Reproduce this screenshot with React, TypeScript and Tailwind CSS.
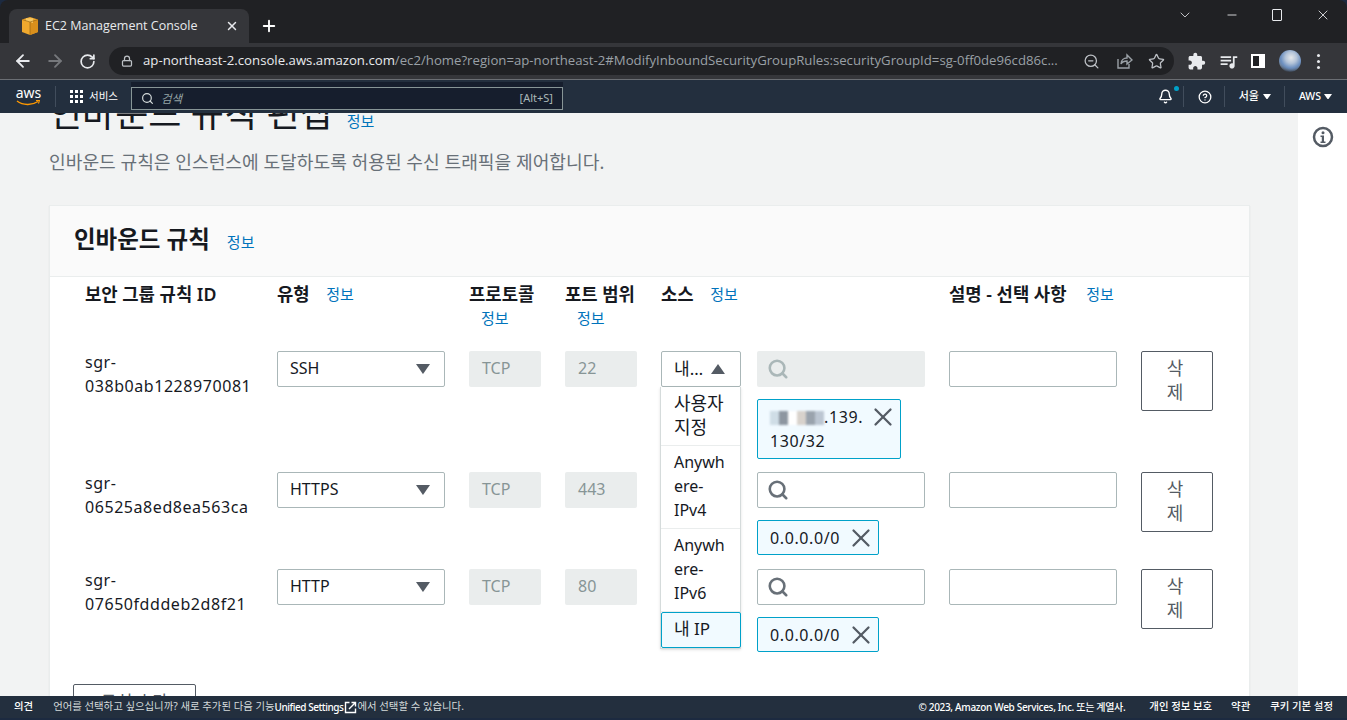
import {
  ArrowLeft,
  ArrowRight,
  RotateCw,
  Lock,
  Search,
  Star,
  Bell,
  CircleHelp,
  X,
  Plus,
  Minus,
  ChevronDown,
  ZoomOut,
} from "lucide-react"
import { MdExtension, MdOutlineQueueMusic } from "react-icons/md"

function Caret({ up = false, color = "#545b64", size = 14 }: { up?: boolean; color?: string; size?: number }) {
  return (
    <svg width={size} height={size * 0.72} viewBox="0 0 14 10" className="shrink-0">
      <polygon points={up ? "7,0 14,10 0,10" : "0,0 14,0 7,10"} fill={color} />
    </svg>
  )
}

function InfoLink({ className = "" }: { className?: string }) {
  return <a className={"text-[15px] font-normal text-[#0073bb] " + className}>정보</a>
}

function Favicon() {
  return (
    <svg width="16" height="18" viewBox="0 0 16 18">
      <polygon points="8,0 16,2.5 16,15 8,18 0,15 0,2.5" fill="#f0a92e" />
      <polygon points="8,5 16,2.5 16,15 8,18" fill="#d98f1c" />
      <polygon points="4,1.300 11,1.300 11,6 8,5 4,4" fill="#f8c861" />
      <path d="M8 5v13M0 2.500 8 5l8-2.500" stroke="#8a5a10" strokeWidth="0.6" fill="none" />
    </svg>
  )
}

function ShareIcon() {
  return (
    <svg width="18" height="18" viewBox="0 0 18 18" fill="none" stroke="#9aa0a6" strokeWidth="1.4">
      <path d="M3 7v9h11v-4" />
      <path d="M6 12c0-4 3-6 6-6V3l5 5-5 4V9c-3 0-5 1-6 3z" />
    </svg>
  )
}

function Chrome() {
  return (
    <div className="shrink-0 font-['Open_Sans','Noto_Sans_CJK_KR',sans-serif]">
      <div className="flex h-[43px] items-end bg-[#202124] pl-[9px]">
        <div className="flex h-[34px] w-[240px] items-center rounded-t-lg bg-[#35363a] pl-[13px] pr-[10px]">
          <Favicon />
          <span className="ml-[7px] flex-1 text-[12.5px] text-[#e8eaed]">EC2 Management Console</span>
          <X size={14} strokeWidth={2.5} className="text-[#e8eaed]" />
        </div>
        <div className="ml-[11px] flex h-[34px] items-center">
          <Plus size={18} strokeWidth={2.5} className="text-white" />
        </div>
        <div className="relative ml-auto flex h-full items-start self-start pt-[7px] text-[#e8eaed]">
          <ChevronDown size={16} strokeWidth={1.2} className="mr-[32px]" />
          <Minus size={14} strokeWidth={1.5} className="mr-[33px] mt-[1px]" />
          <div className="mr-[33px] mt-[2px] h-[12px] w-[10px] rounded-[1px] border border-[#e8eaed]" />
          <X size={16} strokeWidth={1.3} className="mr-[16px]" />
        </div>
      </div>
      <div className="flex h-[36px] items-center bg-[#35363a] pl-[13px]">
        <ArrowLeft size={20} strokeWidth={2.2} className="text-[#e8eaed]" />
        <ArrowRight size={20} strokeWidth={2.2} className="ml-[12px] text-[#76787c]" />
        <RotateCw size={17} strokeWidth={2.4} className="ml-[14px] text-[#e8eaed]" />
        <div className="ml-[13px] flex h-[28px] w-[1065px] items-center rounded-full bg-[#202124] pl-[12px]">
          <Lock size={12} strokeWidth={2.5} className="text-[#bdc1c6]" />
          <div className="ml-[10px] w-[924px] overflow-hidden whitespace-nowrap text-[13.2px] text-[#9aa0a6]">
            <span className="text-[#e8eaed]">ap-northeast-2.console.aws.amazon.com</span>
            /ec2/home?region=ap-northeast-2#ModifyInboundSecurityGroupRules:securityGroupId=sg-0ff0de96cd86c...
          </div>
          <ZoomOut size={17} strokeWidth={1.8} className="ml-[16px] text-[#bdc1c6]" />
          <div className="ml-[15px]">
            <ShareIcon />
          </div>
          <Star size={17} strokeWidth={1.8} className="ml-[15px] text-[#bdc1c6]" />
        </div>
        <MdExtension size={19} className="ml-[13px] text-[#e8eaed]" />
        <MdOutlineQueueMusic size={21} className="ml-[12px] text-[#e8eaed]" />
        <div className="ml-[12px] flex h-[14px] w-[14px] justify-start border-2 border-white">
          <div className="h-full w-[6px] bg-[#202124]" />
          <div className="h-full flex-1 bg-white" />
        </div>
        <div className="ml-[14px] h-[22px] w-[22px] rounded-full bg-[radial-gradient(circle_at_55%_35%,#e6e8ea_0%,#b4c4d8_30%,#6c8fbf_55%,transparent_75%),linear-gradient(180deg,#5f86b8_0%,#6f7d8c_65%,#39424f_100%)]" />
        <div className="ml-[16px] flex flex-col gap-[3px]">
          <div className="h-[3px] w-[3px] rounded-full bg-[#e8eaed]" />
          <div className="h-[3px] w-[3px] rounded-full bg-[#e8eaed]" />
          <div className="h-[3px] w-[3px] rounded-full bg-[#e8eaed]" />
        </div>
      </div>
      <div className="h-px bg-[#6b6e73]" />
    </div>
  )
}

function AwsNav() {
  return (
    <div className="flex h-[33px] shrink-0 items-center bg-[#232f3e] pl-[16px] text-white">
      <div className="flex w-[25px] flex-col items-center">
        <span className="text-[14px] leading-[12px]">aws</span>
        <svg width="25" height="6" viewBox="0 0 25 6" fill="none" className="mt-[1px]">
          <path d="M1 1c6 4.500 15 4.500 21 .5" stroke="#f90" strokeWidth="1.500" />
          <path d="M20 .5l3.500-.3-1 3.300" stroke="#f90" strokeWidth="1.100" />
        </svg>
      </div>
      <div className="ml-[14px] h-[21px] w-px bg-[#414d5c]" />
      <div className="ml-[14px] grid grid-cols-3 gap-[2px]">
        {Array.from({ length: 9 }).map((_, i) => (
          <div key={i} className="h-[3px] w-[3px] bg-white" />
        ))}
      </div>
      <span className="ml-[6px] text-[10.5px]">서비스</span>
      <div className="ml-[13px] mt-[2px] h-[28px] w-[432px] self-start bg-[#161e2d] pt-[5px]">
        <div className="flex h-[23px] items-center border border-[#879596] pl-[9px] pr-[9px]">
          <Search size={13} strokeWidth={2.2} className="text-[#d5dbdb]" />
          <span className="ml-[7px] flex-1 text-[11.5px] italic text-[#95a5a6]">검색</span>
          <span className="text-[11px] text-[#aab7b8]">[Alt+S]</span>
        </div>
      </div>
      <div className="ml-auto flex items-center">
        <div className="relative">
          <Bell size={15} strokeWidth={2.2} />
          <div className="absolute -right-[6px] -top-[3px] h-[5px] w-[5px] rounded-full bg-[#00a1c9]" />
        </div>
        <div className="ml-[10px] h-[21px] w-px bg-[#414d5c]" />
        <CircleHelp size={14} strokeWidth={2.2} className="ml-[14px]" />
        <div className="ml-[12px] h-[21px] w-px bg-[#414d5c]" />
        <span className="ml-[14px] text-[11px] font-medium">서울</span>
        <div className="ml-[4px]">
          <Caret color="#ffffff" size={8} />
        </div>
        <div className="ml-[13px] h-[21px] w-px bg-[#414d5c]" />
        <span className="ml-[14px] text-[10.5px] font-medium">AWS</span>
        <div className="ml-[3px] mr-[15px]">
          <Caret color="#ffffff" size={8} />
        </div>
      </div>
    </div>
  )
}

const COLS = "grid grid-cols-[168px_168px_72px_72px_72px_168px_168px_72px] gap-x-6"
const INPUT = "flex h-[36px] items-center rounded-[2px] border border-[#aab7b8] bg-white"
const READONLY = "flex h-[36px] items-center rounded-[2px] bg-[#eaeded] pb-[2px] pl-[13px] text-[#879596]"

function BlurredIp() {
  return (
    <span className="inline-flex h-[14px] w-[54px] translate-y-[2px] blur-[1.2px]">
      <span className="h-full w-[9px] bg-[#cfdde6]" />
      <span className="h-full w-[9px] bg-[#8d96a0]" />
      <span className="h-full w-[9px] bg-white" />
      <span className="h-full w-[9px] bg-[#d8d2cc]" />
      <span className="h-full w-[9px] bg-[#9aa3ad]" />
      <span className="h-full w-[9px] bg-[#bcc6d2]" />
    </span>
  )
}

function Chip({ children, wrap = false }: { children: React.ReactNode; wrap?: boolean }) {
  return (
    <div
      className={
        "mt-3 flex items-start rounded-[2px] border border-[#00a1c9] bg-[#f1faff] py-[5px] pl-[12px] pr-[2px] " +
        (wrap ? "w-[144px]" : "h-[35px] w-[122px]")
      }
    >
      <div className="min-w-0 flex-1 leading-[24px] tracking-[0.6px]">{children}</div>
      <X size={30} strokeWidth={1.8} className="-mt-[3px] shrink-0 text-[#545b64]" />
    </div>
  )
}

function RuleRow({
  id,
  type,
  port,
  chip,
  wrap,
  disabledSearch,
  open,
  className,
}: {
  id: string
  type: string
  port: string
  chip: React.ReactNode
  wrap?: boolean
  disabledSearch?: boolean
  open?: boolean
  className?: string
}) {
  return (
    <div className={COLS + " " + className}>
      <div className="-mt-[1px] leading-[24px] tracking-[0.56px]">
        sgr-
        <br />
        {id}
      </div>
      <div className={INPUT + " justify-between pl-[12px] pr-[14px]"}>
        <span className="-translate-y-px">{type}</span>
        <Caret />
      </div>
      <div className={READONLY}>TCP</div>
      <div className={READONLY}>{port}</div>
      <div className="relative">
        {open ? (
          <>
            <div className={INPUT + " w-[80px] justify-between pl-[12px] pr-[15px] text-[17px]"}>
              <span className="w-[30px] truncate">내 IP</span>
              <Caret up />
            </div>
            <SourceMenu />
          </>
        ) : null}
      </div>
      <div>
        <div
          className={
            disabledSearch
              ? "flex h-[36px] items-center rounded-[2px] bg-[#eaeded] pl-[10px]"
              : INPUT + " pl-[9px]"
          }
        >
          <Search size={22} strokeWidth={2.8} className={disabledSearch ? "text-[#aab7b8]" : "text-[#687078]"} />
        </div>
        <Chip wrap={wrap}>{chip}</Chip>
      </div>
      <div className={INPUT} />
      <button className="h-[60px] break-all rounded-[2px] border border-[#545b64] bg-white pb-[2px] pl-[22px] pr-[26px] text-[18px] leading-[24px] text-[#545b64]">
        삭제
      </button>
    </div>
  )
}

function SourceMenu() {
  const row = "break-words border-b border-[#eaeded] pb-[6px] pl-[13px] pr-[11px] pt-[4px] leading-[24px]"
  return (
    <div className="absolute left-[-1px] top-[36px] z-10 w-[81px] border border-t-0 border-[#d5dbdb] bg-white shadow-sm">
      <div className={row + " text-[18px]"}>사용자 지정</div>
      <div className={row}>Anywhere-IPv4</div>
      <div className={row}>Anywhere-IPv6</div>
      <div className="h-[36px] w-[80px] rounded-[2px] border border-[#00a1c9] bg-[#f1faff] pl-[12px] pt-[4px] text-[17px] leading-[24px]">
        내 IP
      </div>
    </div>
  )
}

function RulesCard() {
  return (
    <div className="mt-[31px] w-[1201px] border border-b-0 border-[#eaeded] bg-white pb-[40px] shadow-[0_1px_1px_0_rgba(0,28,36,0.1)]">
      <div className="flex h-[71px] items-center border-b border-[#eaeded] bg-[#fafafa] pb-[4px] pl-[24px]">
        <h2 className="text-[23.5px] font-semibold leading-[28px] text-[#16191f]">인바운드 규칙</h2>
        <InfoLink className="ml-[17px] mt-[6px]" />
      </div>
      <div className="relative pl-[35px] pt-[5px]">
        <div className={COLS + " text-[17.75px] font-semibold leading-[24px]"}>
          <div>보안 그룹 규칙 ID</div>
          <div>
            유형 <InfoLink className="ml-3 inline-block -translate-y-px" />
          </div>
          <div>
            프로토콜 <InfoLink className="ml-3 inline-block -translate-y-px" />
          </div>
          <div>
            포트 범위 <InfoLink className="ml-3 inline-block -translate-y-px" />
          </div>
          <div className="whitespace-nowrap">
            소스 <InfoLink className="ml-3 inline-block -translate-y-px" />
          </div>
          <div />
          <div className="col-span-2 whitespace-nowrap">
            설명 - 선택 사항 <InfoLink className="ml-[15px] inline-block -translate-y-px" />
          </div>
        </div>
        <div className="mt-[20px]">
          <RuleRow
            id="038b0ab1228970081"
            type="SSH"
            port="22"
            open
            disabledSearch
            wrap
            className="mb-[13px]"
            chip={
              <>
                <BlurredIp />
                .139.
                <br />
                130/32
              </>
            }
          />
          <RuleRow id="06525a8ed8ea563ca" type="HTTPS" port="443" className="mb-[14px]" chip="0.0.0.0/0" />
          <RuleRow id="07650fdddeb2d8f21" type="HTTP" port="80" chip="0.0.0.0/0" />
        </div>
        <button className="-ml-[12px] mt-[32px] h-[36px] w-[123px] rounded-[2px] border border-[#545b64] bg-white text-[17px] text-[#545b64]">
          규칙 추가
        </button>
      </div>
    </div>
  )
}

export default function App() {
  return (
    <div className="h-[720px] w-[1347px] overflow-hidden bg-[#1c2a40] font-['Noto_Sans','Noto_Sans_CJK_KR',sans-serif] text-[16px] text-[#16191f]">
      <div className="flex h-[718px] flex-col overflow-hidden rounded-t-lg">
        <Chrome />
        <AwsNav />
        <div className="flex h-[583px] shrink-0 overflow-hidden">
          <div className="w-[1298px] overflow-hidden bg-[#f2f3f3] pl-[49px]">
            <div className="-mt-[17px] flex items-end">
              <h1 className="text-[36px] font-normal leading-[36px]">인바운드 규칙 편집</h1>
              <InfoLink className="ml-[14px]" />
            </div>
            <p className="mt-[18px] text-[18.15px] leading-[24px] text-[#687078]">
              인바운드 규칙은 인스턴스에 도달하도록 허용된 수신 트래픽을 제어합니다.
            </p>
            <RulesCard />
          </div>
          <div className="flex flex-1 justify-center bg-white pt-[13px]">
            <svg width="22" height="22" viewBox="0 0 22 22">
              <circle cx="11" cy="11" r="9" fill="none" stroke="#545b64" strokeWidth="2.500" />
              <circle cx="11" cy="6.800" r="1.500" fill="#545b64" />
              <path d="M8.500 9.500h3.500v6h1.500v1.500h-5v-1.500h1.300v-4.500h-1.300z" fill="#545b64" />
            </svg>
          </div>
        </div>
        <div className="flex h-[22px] shrink-0 items-center bg-[#232f3e] pl-[14px] pr-[14px] text-[10.4px] text-[#d5dbdb]">
          <span className="font-medium text-white">의견</span>
          <span className="ml-[20px]">언어를 선택하고 싶으십니까? 새로 추가된 다음 기능</span>
          <span className="text-[10px] font-medium tracking-[-0.45px] text-white">Unified Settings</span>
          <svg width="13" height="13" viewBox="0 0 13 13" fill="none" stroke="#fff" strokeWidth="1.400" className="ml-[1px]">
            <path d="M11.500 7.500v4h-10v-10h4" />
            <path d="M5 8l6-6M7.500 1.500h4v4" />
          </svg>
          <span>에서 선택할 수 있습니다.</span>
          <span className="ml-auto text-[10px] font-medium tracking-[-0.32px] text-white">© 2023, Amazon Web Services, Inc. 또는 계열사.</span>
          <span className="ml-[24px] font-medium text-white">개인 정보 보호</span>
          <span className="ml-[19px] font-medium text-white">약관</span>
          <span className="ml-[20px] font-medium text-white">쿠키 기본 설정</span>
        </div>
      </div>
    </div>
  )
}
